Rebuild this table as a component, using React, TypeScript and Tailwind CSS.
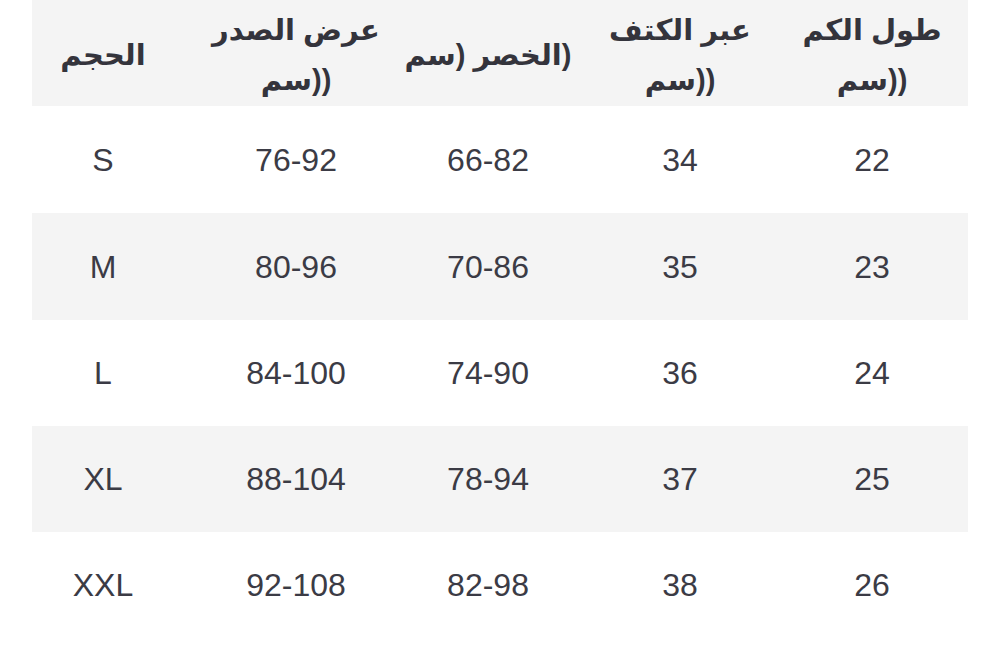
// the source screenshot shows the old (pre bracket-pair) bidi look, so the
// header lines are spelled out in visual order with LRM marks
const LRM = "\u200E";

const headers: string[][] = [
  ["الحجم"],
  ["عرض الصدر", "سم))"],
  [`سم${LRM}) الخصر${LRM})`],
  ["عبر الكتف", "سم))"],
  ["طول الكم", "سم))"]
];

const rows = [
  ["S", "76-92", "66-82", "34", "22"],
  ["M", "80-96", "70-86", "35", "23"],
  ["L", "84-100", "74-90", "36", "24"],
  ["XL", "88-104", "78-94", "37", "25"],
  ["XXL", "92-108", "82-98", "38", "26"]
];

const rowHeights = ["h-[107px]", "h-[107px]", "h-[106px]", "h-[106px]", "h-[106px]"];

export default function App() {
  return (
    <div
      className="w-[1000px] h-[652px] overflow-hidden bg-white text-[#3b3b45]"
      style={{ fontFamily: '"Liberation Sans", "DejaVu Sans", sans-serif' }}
    >
      <div className="ml-[32px] w-[936px]">
        <div className="grid h-[106px] grid-cols-[168px_repeat(4,192px)] items-center bg-[#f4f4f4] pt-[4px]">
          {headers.map((lines, i) => (
            <div key={i} className={`flex flex-col items-center ${i === 0 ? "pr-[26px]" : ""}`}>
              {lines.map((line) => (
                <div
                  key={line}
                  className="whitespace-nowrap text-center text-[29px] font-bold leading-[50px] text-[#34343c]"
                >
                  {line}
                </div>
              ))}
            </div>
          ))}
        </div>
        {rows.map((row, r) => (
          <div
            key={row[0]}
            className={`grid grid-cols-[168px_repeat(4,192px)] items-center ${rowHeights[r]} ${
              r % 2 === 1 ? "bg-[#f4f4f4]" : "bg-white"
            }`}
          >
            {row.map((cell, i) => (
              <div key={i} className={`text-center text-[32px] ${i === 0 ? "pr-[26px]" : ""}`}>
                {cell}
              </div>
            ))}
          </div>
        ))}
      </div>
    </div>
  );
}
